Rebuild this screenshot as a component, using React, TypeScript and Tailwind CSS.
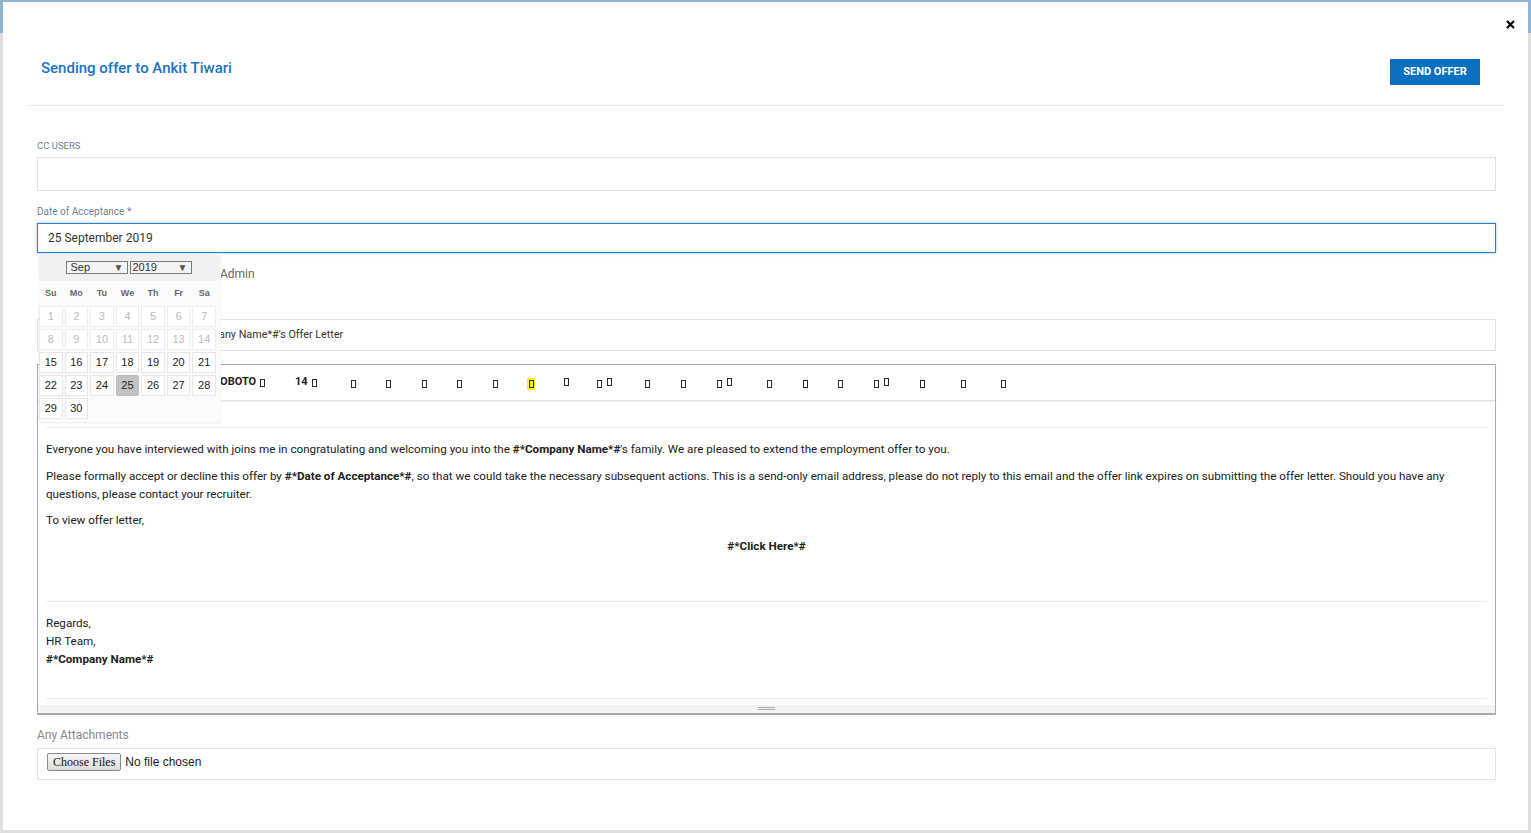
import React from "react";

const Box = () => <span className="inline-block w-[5px] h-[8px] border border-[#2a2a3a]" />;
const Pair = () => (
  <span className="inline-flex items-end gap-[5px]">
    <Box />
    <span className="inline-flex -translate-y-[2px]">
      <Box />
    </span>
  </span>
);

const days = Array.from({ length: 30 }, (_, i) => i + 1);

function Calendar() {
  return (
    <div className="absolute left-[2px] top-full mt-[1px] w-[182px] h-[168px] bg-[#fbfbfb] shadow-[0_1px_2px_rgba(0,0,0,0.08)] z-10 font-['Liberation_Sans',Arial,sans-serif]">
      <div className="h-[27px] w-[181px] bg-[#f0f0f0] rounded-[4px] flex items-center justify-center gap-[2px] pr-[2px]">
        <div className="w-[62px] h-[13px] border border-[#7a7a7a] bg-[#f4f4f4] flex items-center justify-between pl-[4px] pr-[3px] text-[11px] leading-none text-[#333]">
          <span>Sep</span>
          <span className="text-[10px] text-[#555]">▼</span>
        </div>
        <div className="w-[62px] h-[13px] border border-[#7a7a7a] bg-[#f4f4f4] flex items-center justify-between pl-[2px] pr-[3px] text-[11px] leading-none text-[#333]">
          <span>2019</span>
          <span className="text-[10px] text-[#555]">▼</span>
        </div>
      </div>
      <div className="grid grid-cols-7 w-[177px] gap-x-[2px] mt-[6px] text-[9px] font-bold text-[#666] text-center leading-[12px]">
        {["Su", "Mo", "Tu", "We", "Th", "Fr", "Sa"].map((d) => (
          <span key={d}>{d}</span>
        ))}
      </div>
      <div className="grid grid-cols-7 w-[177px] gap-x-[2px] gap-y-[2px] mt-[7px] text-[11px] text-center">
        {days.map((d) => (
          <div
            key={d}
            className={
              "h-[21px] flex items-center justify-center border " +
              (d === 25
                ? "bg-[#c2c2c2] border-[#bcbcbc] rounded-[2px] text-[#222]"
                : d < 15
                ? "bg-white border-[#ededed] text-[#bdbdbd]"
                : "bg-white border-[#e6e6e6] text-[#222]")
            }
          >
            {d}
          </div>
        ))}
      </div>
    </div>
  );
}

export default function App() {
  return (
    <div className="relative w-[1531px] h-[833px] overflow-hidden bg-[#dedede] font-['Roboto','Liberation_Sans',sans-serif]">
      <div className="h-[33px] bg-[#90b3d8]" />
      <div className="absolute left-[3px] top-[2px] right-[3px] bottom-[3px] bg-white">
        <div className="h-[44px] flex justify-end items-start pt-[18px] pr-[13px]">
          <svg width="9" height="9" viewBox="0 0 9 9">
            <path d="M1 1L8 8M8 1L1 8" stroke="#000" strokeWidth="2.2" />
          </svg>
        </div>
        <div className="h-[59px] pl-[38px] pr-[48px] flex justify-between items-start">
          <div className="mt-[12px] text-[15px] leading-[20px] font-medium text-[#1b72c4]">
            Sending offer to Ankit Tiwari
          </div>
          <button className="mt-[13px] h-[26px] w-[90px] bg-[#0a70c2] text-white text-[11px] font-bold">
            SEND OFFER
          </button>
        </div>
        <div className="mx-[25px] border-t border-[#e8e8e8]" />

        <div className="pl-[34px] pr-[32px]">
          <div className="mt-[34px] text-[9.5px] leading-[12px] text-[#6f7f8f]">CC USERS</div>
          <div className="mt-[5px] h-[34px] border border-[#e3e3e3]" />
          <div className="mt-[15px] text-[10px] leading-[12px] text-[#6f7f8f]">Date of Acceptance *</div>
          <div className="relative mt-[5px]">
            <div className="h-[30px] border border-[#2a7fd4] shadow-[0_0_3px_rgba(42,127,212,0.45)] flex items-center pl-[10px] text-[12px] text-[#333]">
              25 September 2019
            </div>
            <Calendar />
          </div>
          <div className="mt-[13px] h-[16px] pl-[183px] text-[12px] leading-[16px] text-[#666]">Admin</div>
          <div className="mt-[37px] h-[32px] border border-[#e3e3e3] flex items-center pl-[141px] text-[10.8px] text-[#333]">
            #*Company Name*#'s Offer Letter
          </div>

          <div className="mt-[13px] border border-[#ababab] border-b-0">
            <div className="h-[36px] border-b border-[#e2e2e2] shadow-[0_1px_2px_rgba(0,0,0,0.06)] flex items-center pl-[175px] text-[11px] font-bold text-[#222]">
              <span className="w-[82px] flex items-center gap-[4px]">
                ROBOTO <Box />
              </span>
              <span className="w-[56px] flex items-center gap-[4px]">
                14 <Box />
              </span>
              <span className="flex items-center mt-[3px]">
                <Box />
                <span className="ml-[30px] inline-flex"><Box /></span>
                <span className="ml-[31px] inline-flex"><Box /></span>
                <span className="ml-[30px] inline-flex"><Box /></span>
                <span className="ml-[31px] inline-flex"><Box /></span>
                <span className="ml-[29px] inline-flex w-[8px] h-[12px] bg-[#ffff00] items-center justify-center"><Box /></span>
                <span className="ml-[29px] inline-flex -translate-y-[2px]"><Box /></span>
                <span className="ml-[28px] inline-flex"><Pair /></span>
                <span className="ml-[33px] inline-flex"><Box /></span>
                <span className="ml-[31px] inline-flex"><Box /></span>
                <span className="ml-[31px] inline-flex"><Pair /></span>
                <span className="ml-[35px] inline-flex"><Box /></span>
                <span className="ml-[31px] inline-flex"><Box /></span>
                <span className="ml-[30px] inline-flex"><Box /></span>
                <span className="ml-[31px] inline-flex"><Pair /></span>
                <span className="ml-[31px] inline-flex"><Box /></span>
                <span className="ml-[36px] inline-flex"><Box /></span>
                <span className="ml-[35px] inline-flex"><Box /></span>
              </span>
            </div>
            <div className="px-[8px] pt-[26px] text-[11.65px] leading-[18px] text-[#212121]">
              <div className="border-t border-[#ececec]" />
              <p className="mt-[12px]">
                Everyone you have interviewed with joins me in congratulating and welcoming you into the{" "}
                <b>#*Company Name*#</b>'s family. We are pleased to extend the employment offer to you.
              </p>
              <p className="mt-[9px]">
                Please formally accept or decline this offer by <b>#*Date of Acceptance*#</b>, so that we could take the
                necessary subsequent actions. This is a send-only email address, please do not reply to this email and
                the offer link expires on submitting the offer letter. Should you have any questions, please contact your
                recruiter.
              </p>
              <p className="mt-[8px]">To view offer letter,</p>
              <p className="mt-[8px] text-center font-bold">#*Click Here*#</p>
              <div className="mt-[46px] border-t border-[#ececec]" />
              <p className="mt-[12px]">Regards,</p>
              <p>HR Team,</p>
              <p className="font-bold">#*Company Name*#</p>
              <div className="mt-[30px] border-t border-[#ececec]" />
            </div>
            <div className="mt-[6px] h-[10px] bg-[#f3f3f3] border-b-2 border-[#ababab] flex justify-center items-start pt-[2px]">
              <div className="w-[17px] flex flex-col gap-[1px]">
                <div className="h-[1px] bg-[#aaa]" />
                <div className="h-[1px] bg-[#aaa]" />
              </div>
            </div>
          </div>

          <div className="mt-[12px] text-[12px] leading-[16px] text-[#888]">Any Attachments</div>
          <div className="mt-[5px] h-[32px] border border-[#e3e3e3] flex items-center pl-[9px] pb-[4px]">
            <span className="h-[18px] px-[5px] border border-[#8a8a8a] bg-gradient-to-b from-[#f6f6f6] to-[#dcdcdc] rounded-[2px] text-[12px] leading-[16px] text-[#111] font-['Liberation_Serif',serif]">
              Choose Files
            </span>
            <span className="ml-[4px] text-[12px] text-[#222] font-['Liberation_Sans',Arial,sans-serif]">No file chosen</span>
          </div>
        </div>
      </div>
    </div>
  );
}
